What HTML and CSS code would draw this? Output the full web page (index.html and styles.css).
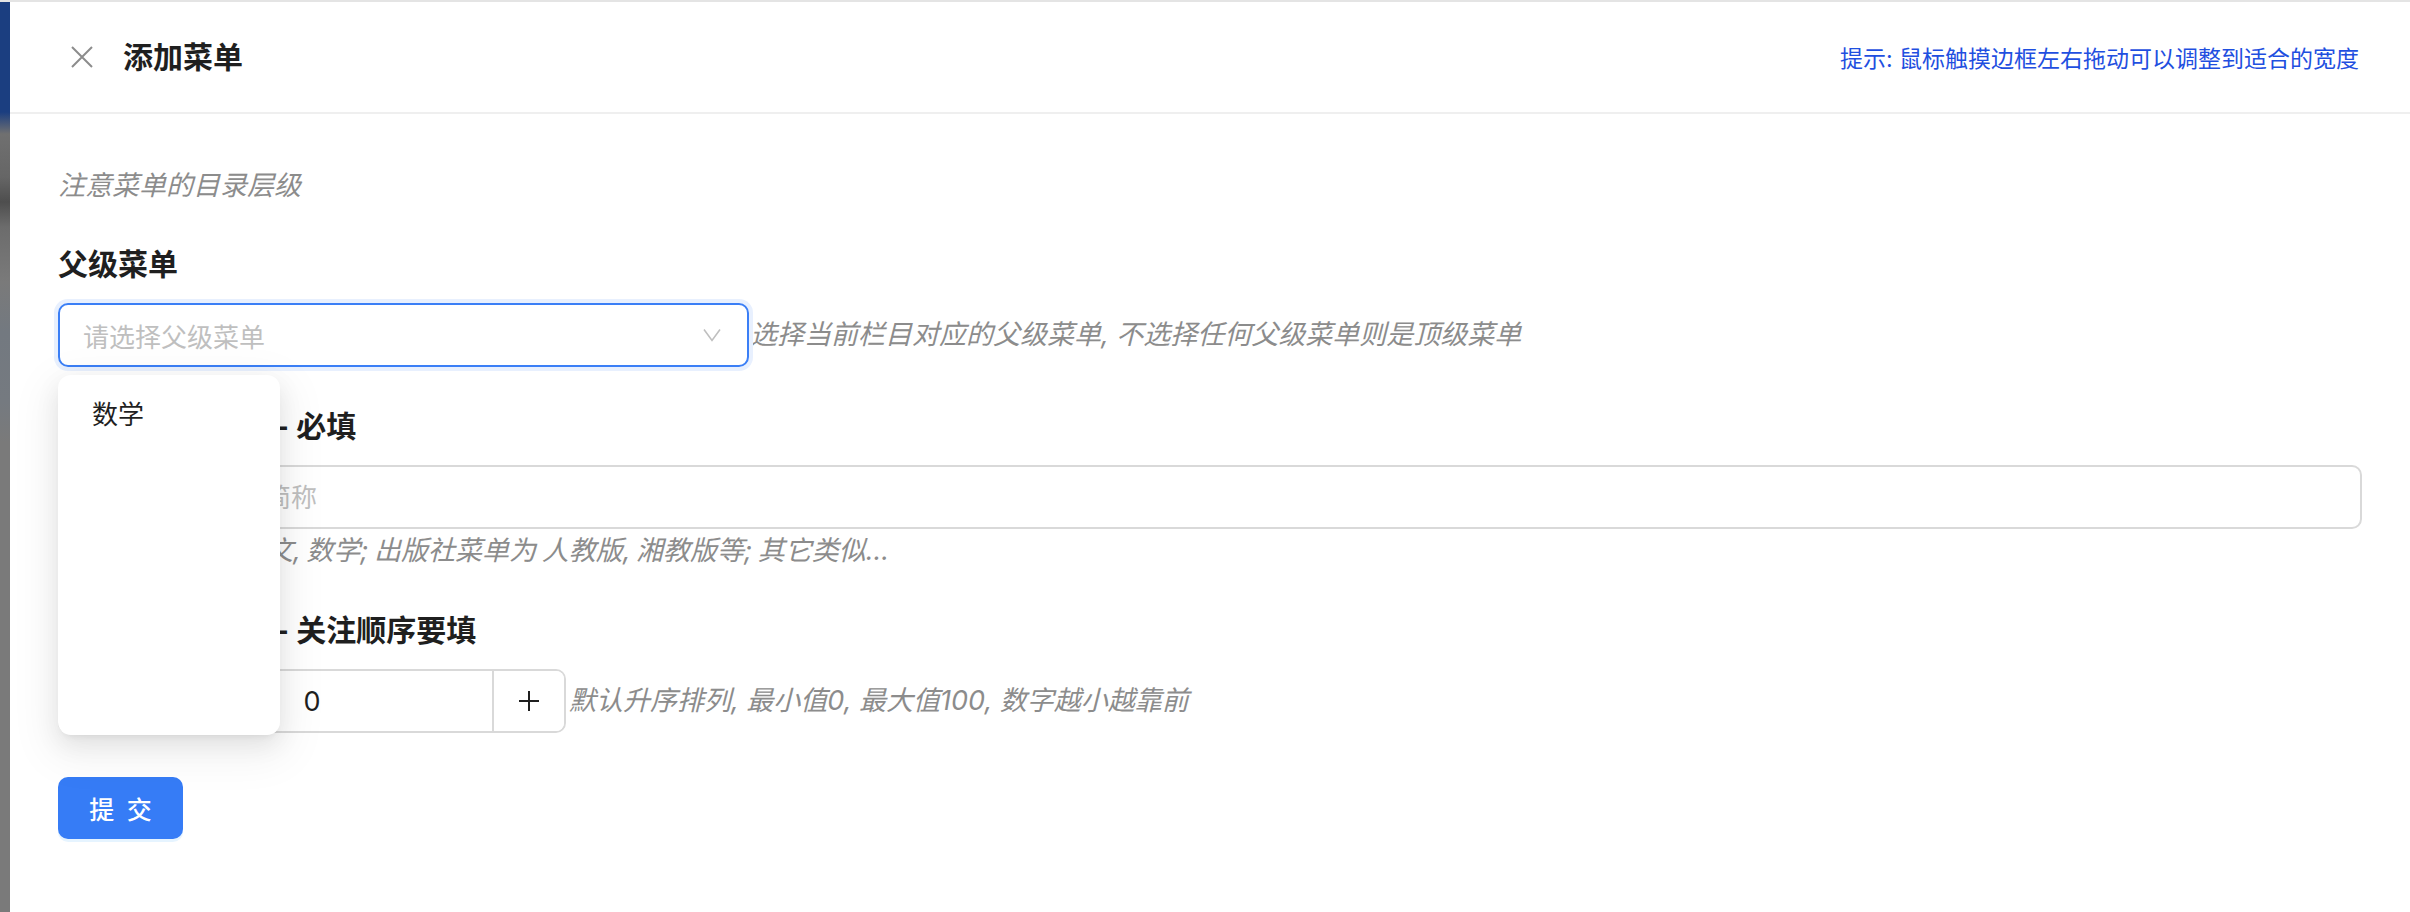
FILE: index.html
```html
<!DOCTYPE html>
<html lang="zh-CN">
<head>
  <meta charset="UTF-8">
  <meta name="viewport" content="width=device-width, initial-scale=1.0">
  <title>添加菜单</title>
  <link rel="stylesheet" href="styles.css">
</head>
<body>
  <div class="backdrop"></div>

  <div class="drawer">
    <div class="drawer-header">
      <button class="close-btn" aria-label="关闭">
        <svg width="24" height="24" viewBox="0 0 24 24"><path d="M2 2 L22 22 M22 2 L2 22" stroke="#8c8c8c" stroke-width="2" fill="none"/></svg>
      </button>
      <h2 class="drawer-title">添加菜单</h2>
      <span class="drawer-tip">提示: 鼠标触摸边框左右拖动可以调整到适合的宽度</span>
    </div>

    <div class="drawer-body">
      <p class="note">注意菜单的目录层级</p>

      <div class="form-item">
        <label class="label">父级菜单</label>
        <div class="row">
          <div class="select-wrap">
            <div class="select">
              <span class="placeholder">请选择父级菜单</span>
              <svg width="18" height="14" viewBox="0 0 18 14"><path d="M1 1.5 L9 12.5 L17 1.5" stroke="#bfbfbf" stroke-width="1.6" fill="none"/></svg>
            </div>
            <div class="dropdown">
              <div class="option">数学</div>
            </div>
          </div>
          <span class="help">选择当前栏目对应的父级菜单, 不选择任何父级菜单则是顶级菜单</span>
        </div>
      </div>

      <div class="form-item">
        <label class="label" for="name">当前菜单的名称 - 必填</label>
        <input class="input" id="name" type="text" placeholder="请输入菜单名称简称">
        <div class="help help-below">如: 学科菜单为 语文, 数学; 出版社菜单为 人教版, 湘教版等; 其它类似...</div>
      </div>

      <div class="form-item last">
        <label class="label" for="sort">菜单显示的排序 - 关注顺序要填</label>
        <div class="row">
          <div class="num">
            <button class="num-btn minus" aria-label="减少">
              <svg width="22" height="22" viewBox="0 0 22 22"><path d="M1 11 H21" stroke="#1f1f1f" stroke-width="2"/></svg>
            </button>
            <input class="num-input" id="sort" type="text" value="0">
            <button class="num-btn plus" aria-label="增加">
              <svg width="22" height="22" viewBox="0 0 22 22"><path d="M1 11 H21 M11 1 V21" stroke="#1f1f1f" stroke-width="2"/></svg>
            </button>
          </div>
          <span class="help help-side">默认升序排列, 最小值0, 最大值100, 数字越小越靠前</span>
        </div>
      </div>

      <button class="btn-primary">提 交</button>
    </div>
  </div>
</body>
</html>
```

FILE: styles.css
```css
* {
  box-sizing: border-box;
}
body {
  margin: 0;
  height: 912px;
  display: flex;
  overflow: hidden;
  border-top: 2px solid #e4e4e4;
  font-family: "Inter", "Noto Sans CJK SC", sans-serif;
  color: #1f1f1f;
  background: #fff;
}
.backdrop {
  width: 10px;
  flex: none;
  background: linear-gradient(to bottom,
    #1b3e80 0, #1b3e80 110px, #707070 132px, #666 175px, #4e4e4e 200px,
    #6c6c6c 225px, #7a7a7a 280px, #737980 330px, #757a80 400px,
    #7a7a7a 440px, #7a7a7a 100%);
}
.drawer {
  flex: 1;
  display: flex;
  flex-direction: column;
  background: #fff;
}
.drawer-header {
  height: 112px;
  display: flex;
  align-items: center;
  padding: 0 51px 0 60px;
  border-bottom: 2px solid #efefef;
}
.close-btn {
  width: 24px;
  height: 24px;
  padding: 0;
  margin-right: 29px;
  border: none;
  background: none;
  display: flex;
}
.drawer-title {
  margin: 0;
  font-size: 30px;
  line-height: 40px;
  font-weight: 700;
}
.drawer-tip {
  margin-left: auto;
  font-size: 23px;
  color: #1f4fe0;
}
.drawer-body {
  padding: 52px 48px 0;
}
.note {
  margin: 0 0 38px;
  font-size: 27px;
  line-height: 40px;
  font-style: italic;
  color: #8c8c8c;
}
.form-item {
  margin-bottom: 39px;
}
.form-item.last {
  margin-bottom: 44px;
}
.label {
  display: block;
  margin-bottom: 19px;
  font-size: 30px;
  line-height: 40px;
  font-weight: 700;
}
.row {
  display: flex;
  align-items: center;
}
.select-wrap {
  position: relative;
  width: 691px;
  flex: none;
}
.select {
  height: 64px;
  display: flex;
  align-items: center;
  padding: 0 26px 0 23px;
  border: 2px solid #3b7ff6;
  border-radius: 10px;
  box-shadow: 0 0 0 4px #e8f0fe;
}
.placeholder {
  flex: 1;
  font-size: 26px;
  color: #bfbfbf;
}
.dropdown {
  position: absolute;
  top: calc(100% + 8px);
  left: 0;
  z-index: 10;
  width: 222px;
  height: 360px;
  padding: 12px;
  background: #fff;
  border-radius: 13px;
  box-shadow: 0 9px 24px 0 rgba(0, 0, 0, 0.08), 0 5px 9px -6px rgba(0, 0, 0, 0.12), 0 14px 42px 12px rgba(0, 0, 0, 0.05);
}
.option {
  padding: 0 22px;
  line-height: 56px;
  font-size: 26px;
  color: #1f1f1f;
}
.help {
  margin-left: 1px;
  font-size: 27px;
  line-height: 40px;
  font-style: italic;
  color: #8c8c8c;
}
.help-below {
  margin: 2px 0 0;
  word-spacing: -2px;
}
.help-side {
  margin-left: 3px;
}
.input {
  display: block;
  width: 100%;
  height: 64px;
  padding: 0 23px;
  border: 2px solid #d9d9d9;
  border-radius: 10px;
  font-family: inherit;
  font-size: 26px;
  color: #1f1f1f;
  outline: none;
}
.input::placeholder {
  color: #bfbfbf;
}
.num {
  width: 508px;
  height: 64px;
  flex: none;
  display: flex;
  border: 2px solid #d9d9d9;
  border-radius: 10px;
  overflow: hidden;
}
.num-btn {
  width: 72px;
  flex: none;
  padding: 0;
  border: none;
  background: #fff;
  display: flex;
  align-items: center;
  justify-content: center;
}
.num-btn.minus {
  border-right: 2px solid #d9d9d9;
}
.num-btn.plus {
  border-left: 2px solid #d9d9d9;
}
.num-input {
  flex: 1;
  min-width: 0;
  border: none;
  outline: none;
  text-align: center;
  font-family: inherit;
  font-size: 27px;
  color: #1f1f1f;
}
.btn-primary {
  width: 125px;
  height: 62px;
  border: none;
  border-radius: 10px;
  background: #367cf6;
  color: #fff;
  font-family: inherit;
  font-size: 25px;
  font-weight: 500;
  letter-spacing: 3px;
  text-indent: 3px;
  box-shadow: 0 3px 0 rgba(5, 145, 255, 0.1);
}
```
